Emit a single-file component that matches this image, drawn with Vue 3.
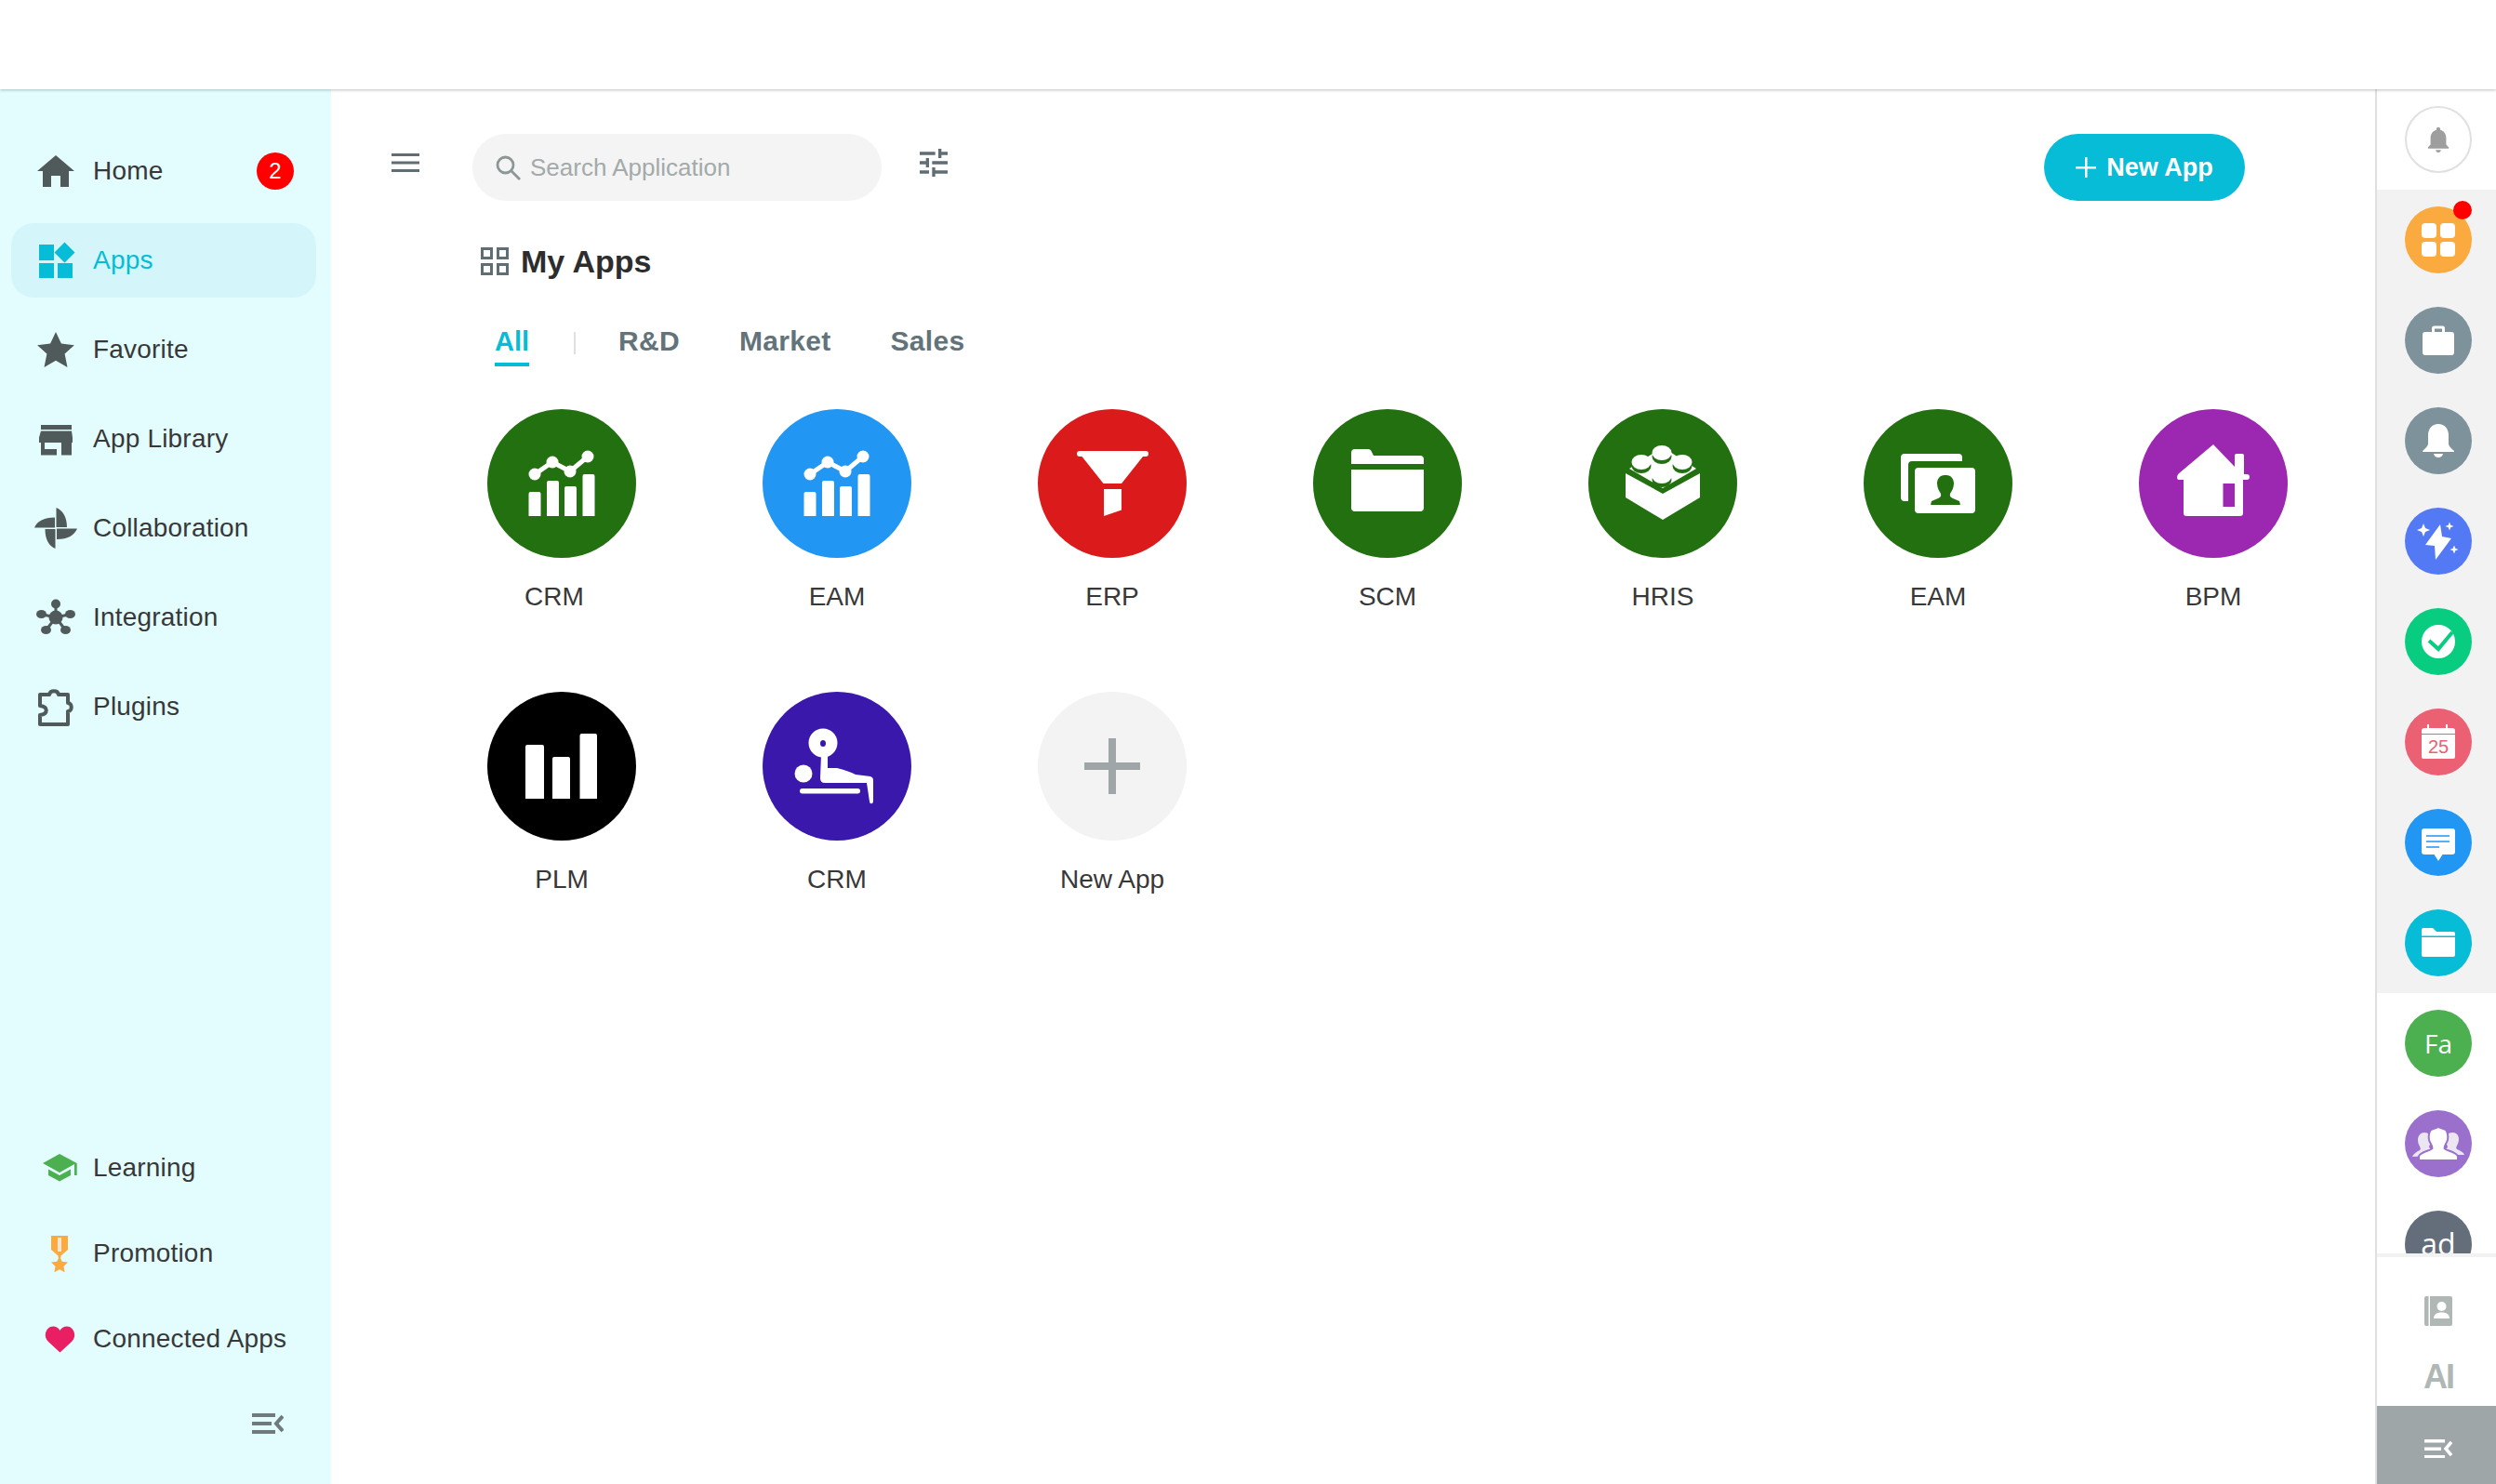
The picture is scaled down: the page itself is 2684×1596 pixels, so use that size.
<script setup>
const tabs = ['R&D', 'Market', 'Sales']
</script>

<template>
  <div class="page">
    <header class="topbar"></header>
    <div class="body">
      <aside class="sidebar">
        <nav class="nav">
          <a class="nav-item">
            <svg class="nav-icon" viewBox="0 0 48 48"><path d="M24 7 4 24h6v17h9V29h10v12h9V24h6z" /></svg>
            <span>Home</span>
            <span class="badge">2</span>
          </a>
          <a class="nav-item active">
            <svg class="nav-icon" viewBox="0 0 48 48">
              <path d="M6 7h16v17H6zM6 27h16v16H6zM26 27h16v16H26zM33.500 4.500 44.500 15.500 33.500 26.500 22.500 15.500z" />
            </svg>
            <span>Apps</span>
          </a>
          <a class="nav-item">
            <svg class="nav-icon" viewBox="0 0 48 48"><path d="m24 5 5.900 12.600 14 1.600-10.300 9.400 2.900 14.400-12.500-7.200-12.500 7.200 2.900-14.400L4.100 19.200l14-1.600z" /></svg>
            <span>Favorite</span>
          </a>
          <a class="nav-item">
            <svg class="nav-icon" viewBox="0 0 48 48">
              <path d="M8 9h33v5H8zM8 15.500h33l1 7V28H6v-5.500zM8 28h4v7h13v6.500H8zM30 28h11v13.500H30z" />
            </svg>
            <span>App Library</span>
          </a>
          <a class="nav-item">
            <svg class="nav-icon" viewBox="0 0 48 48">
              <path d="M24.500 2c7 3 11.500 10 11.500 21H24.500zM25 24.500h22c-3 7-10 11.500-22 11.500zM23.500 46c-7-3-11-10-11-21h11zM1 23.500c3-7 10-11 22-11v11z" />
            </svg>
            <span>Collaboration</span>
          </a>
          <a class="nav-item">
            <svg class="nav-icon" viewBox="0 0 48 48">
              <path class="spoke" d="M24 24V10M24 24 8 20.500M24 24l16-3.500M24 24 13.300 38M24 24l10.700 14" />
              <circle cx="24" cy="24" r="7.500" />
              <circle cx="24" cy="9.500" r="5" />
              <ellipse cx="8.500" cy="20.500" rx="5.500" ry="4.500" />
              <ellipse cx="39.500" cy="20.500" rx="5.500" ry="4.500" />
              <ellipse cx="13.500" cy="37.500" rx="5.500" ry="4.500" />
              <ellipse cx="34.500" cy="37.500" rx="5.500" ry="4.500" />
            </svg>
            <span>Integration</span>
          </a>
          <a class="nav-item">
            <svg class="nav-icon" viewBox="0 0 48 48">
              <path class="outline" d="M7 11h10c1-5 9-5 10 0h10v9c5 0 5 9 0 9v14H7V33c9-1 9-9 0-10z" />
            </svg>
            <span>Plugins</span>
          </a>
        </nav>

        <div class="nav-bottom">
          <a class="bottom-item">
            <svg class="nav-icon" viewBox="0 0 48 48">
              <path fill="#4caf50" d="M24 9 6 19l18 10 16-9v12h2.700V19zM12 25.500 24 32l12-6.500V32l-12 6.500L12 32z" />
            </svg>
            <span>Learning</span>
          </a>
          <a class="bottom-item">
            <svg class="nav-icon" viewBox="0 0 48 48">
              <path fill="#fbaa3f" d="M15 5h18v15l-7.500 6.500v2h-3v-2L15 20zM24 27l2.800 5.700 6.200.9-4.500 4.400 1.100 6.200-5.600-3-5.600 3 1.100-6.200-4.500-4.400 6.200-.9z" />
              <path fill="#f3e7d3" d="M22 7h4v15h-4z" />
            </svg>
            <span>Promotion</span>
          </a>
          <a class="bottom-item">
            <svg class="nav-icon" viewBox="0 0 48 48">
              <path fill="#e91e63" d="M24.500 38.500 12 27c-3-2.800-3.500-6-3-9 .7-4 4-7.500 8-7.500 3.500 0 6 1.700 7.500 4.500 1.500-2.800 4-4.500 7.500-4.500 4 0 7.300 3.500 8 7.500.5 3-.1 6.200-3 9z" />
            </svg>
            <span class="clip">Connected Apps</span>
          </a>
          <button class="collapse">
            <svg width="34" height="22" viewBox="0 0 34 22">
              <path fill="#6f7a7c" d="M0 0h25v4H0zM0 9h21v4H0zM0 18h25v4H0z" />
              <path fill="none" stroke="#6f7a7c" stroke-width="4" d="M33 3 26 11l7 8" />
            </svg>
          </button>
        </div>
      </aside>

      <main class="main">
        <div class="toolbar">
          <svg class="hamburger" width="30" height="20" viewBox="0 0 30 20"><path d="M0 0h30v3H0zM0 8.500h30v3H0zM0 17h30v3H0z" /></svg>
          <div class="search">
            <svg width="28" height="28" viewBox="0 0 28 28" fill="none" stroke="#8c9696" stroke-width="2.800">
              <circle cx="11.500" cy="11.500" r="8.500" />
              <path d="m18 18 9 9" />
            </svg>
            <span>Search Application</span>
          </div>
          <svg class="tune" width="30" height="30" viewBox="3 3 18 18">
            <path d="M3 17v2h6v-2H3zM3 5v2h10V5H3zm10 16v-2h8v-2h-8v-2h-2v6h2zM7 9v2H3v2h4v2h2V9H7zm14 4v-2H11v2h10zm-6-4h2V7h4V5h-4V3h-2v6z" />
          </svg>
          <button class="new-app">
            <svg width="22" height="22" viewBox="0 0 22 22"><path d="M10 0h2.500v22H10zM0 10h22v2.500H0z" fill="#fff" /></svg>
            <span>New App</span>
          </button>
        </div>

        <div class="content">
          <div class="heading">
            <svg width="30" height="30" viewBox="0 0 30 30" fill="none" stroke="#5f6e75" stroke-width="3">
              <path d="M1.500 1.500h10v10h-10zM18.500 1.500h10v10h-10zM1.500 18.500h10v10h-10zM18.500 18.500h10v10h-10z" />
            </svg>
            <h1>My Apps</h1>
          </div>

          <div class="tabs">
            <span class="tab current">All</span>
            <span class="tab-divider"></span>
            <span v-for="tab in tabs" :key="tab" class="tab">{{ tab }}</span>
          </div>

          <div class="grid">
            <div class="app">
              <div class="circle green">
                <svg viewBox="0 0 160 160">
                  <path class="chart-line" d="m51 70 19-13 19 10 19-16" />
                  <circle cx="51" cy="70" r="6.500" /><circle cx="70" cy="57" r="6.500" /><circle cx="89" cy="67" r="6.500" /><circle cx="108" cy="51" r="6.500" />
                  <path d="M44.500 115V91q0-2 2-2h9q2 0 2 2v24zM64 115V79q0-2 2-2h9q2 0 2 2v36zM83 115V85q0-2 2-2h9q2 0 2 2v30zM102.500 115V72q0-2 2-2h9q2 0 2 2v43z" />
                </svg>
              </div>
              <div class="label first">CRM</div>
            </div>
            <div class="app">
              <div class="circle blue">
                <svg viewBox="0 0 160 160">
                  <path class="chart-line" d="m51 70 19-13 19 10 19-16" />
                  <circle cx="51" cy="70" r="6.500" /><circle cx="70" cy="57" r="6.500" /><circle cx="89" cy="67" r="6.500" /><circle cx="108" cy="51" r="6.500" />
                  <path d="M44.500 115V91q0-2 2-2h9q2 0 2 2v24zM64 115V79q0-2 2-2h9q2 0 2 2v36zM83 115V85q0-2 2-2h9q2 0 2 2v30zM102.500 115V72q0-2 2-2h9q2 0 2 2v43z" />
                </svg>
              </div>
              <div class="label">EAM</div>
            </div>
            <div class="app">
              <div class="circle red">
                <svg viewBox="0 0 160 160">
                  <path d="M45 45h71q3 0 3 3t-3 3h-3L90 80H70.500L47.500 51H45q-3 0-3-3t3-3zM71 86h19v22.500L71 115z" />
                </svg>
              </div>
              <div class="label">ERP</div>
            </div>
            <div class="app">
              <div class="circle green">
                <svg viewBox="0 0 160 160">
                  <path d="M41 59V47q0-4 4-4h14q3 0 4 3l2 4h50q4 0 4 4v5zM41 65h78v41q0 4-4 4H45q-4 0-4-4z" />
                </svg>
              </div>
              <div class="label">SCM</div>
            </div>
            <div class="app">
              <div class="circle green">
                <svg viewBox="0 0 160 160">
                  <path d="M40 69 80 91l40-22v26l-40 24-40-24z" />
                  <path d="m44 64 36-23 36 23-36 21z" />
                  <g class="stud">
                    <ellipse cx="79" cy="76" rx="10.500" ry="8" />
                  </g>
                  <ellipse cx="79" cy="72" rx="10.500" ry="8" />
                  <g class="stud">
                    <ellipse cx="79" cy="51" rx="10.500" ry="8" />
                    <ellipse cx="57" cy="61" rx="10.500" ry="8" />
                    <ellipse cx="101" cy="61" rx="10.500" ry="8" />
                  </g>
                  <ellipse cx="57" cy="57" rx="10.500" ry="8" />
                  <ellipse cx="101" cy="57" rx="10.500" ry="8" />
                  <ellipse cx="79" cy="47" rx="10.500" ry="8" />
                </svg>
              </div>
              <div class="label">HRIS</div>
            </div>
            <div class="app">
              <div class="circle green">
                <svg viewBox="0 0 160 160">
                  <path d="M44 48h58q4 0 4 4v4H52q-4 0-4 4v39h-4q-4 0-4-4V52q0-4 4-4z" />
                  <rect x="55" y="63" width="65" height="49" rx="4" />
                  <path class="cut" d="M87 71c-5 0-8 4-8 9 0 4 2 8 4 11 .5 2 0 4-3 5l-7 3-1 4h32l-1-4-7-3c-3-1-3.500-3-3-5 2-3 4-7 4-11 0-5-3-9-8-9z" />
                </svg>
              </div>
              <div class="label">EAM</div>
            </div>
            <div class="app">
              <div class="circle purple">
                <svg viewBox="0 0 160 160">
                  <path d="M80 38 103 62V50q0-2 2-2h6q2 0 2 2v20h3q3 0 3 3t-3 3h-4v36q0 3-3 3H51q-3 0-3-3V76h-5q-2 0-2-3l1-3z" />
                  <path class="cut" d="M90.500 80H103v25H90.500z" />
                </svg>
              </div>
              <div class="label">BPM</div>
            </div>
            <div class="app">
              <div class="circle black">
                <svg viewBox="0 0 160 160">
                  <path d="M41 115V59q0-2 2-2h16q2 0 2 2v56zM70 115V72q0-2 2-2h15q2 0 2 2v43zM99.500 115V47q0-2 2-2h14.500q2 0 2 2v68z" />
                </svg>
              </div>
              <div class="label">PLM</div>
            </div>
            <div class="app">
              <div class="circle indigo">
                <svg viewBox="0 0 160 160">
                  <path fill-rule="evenodd" d="M65 39.500a15.500 15.500 0 1 1 0 31 15.500 15.500 0 0 1 0-31zm0 12.500a3 3.500 0 1 0 0 7 3 3.500 0 0 0 0-7z" />
                  <circle cx="44" cy="88" r="9.500" />
                  <path d="M63 68h7v14h10q12 3 20 7l16 2q3 1 3 4v23q-.5 3-3 2-1-.5-1-2l-3-20H67q-5 0-5-5z" />
                  <rect x="40" y="104" width="65" height="5.500" rx="2.700" />
                </svg>
              </div>
              <div class="label">CRM</div>
            </div>
            <div class="app">
              <div class="circle add">
                <svg viewBox="0 0 160 160"><path d="M76 50h8v60h-8zM50 76h60v8H50z" /></svg>
              </div>
              <div class="label">New App</div>
            </div>
          </div>
        </div>
      </main>

      <aside class="rail">
        <div class="rail-top">
          <div class="dot bell-outline">
            <svg width="28" height="28" viewBox="2 2 20 20"><path fill="#9e9e9e" d="M12 22c1.100 0 2-.9 2-2h-4c0 1.100.9 2 2 2zm6-6v-5c0-3.070-1.630-5.640-4.500-6.320V4c0-.83-.67-1.500-1.500-1.500s-1.500.67-1.500 1.500v.68C7.640 5.360 6 7.920 6 11v5l-2 2v1h16v-1l-2-2z" /></svg>
          </div>
        </div>
        <div class="rail-apps">
          <div class="dot" style="background:#fbaa3f">
            <svg viewBox="0 0 72 72"><rect x="18" y="18" width="16" height="16" rx="4" /><rect x="38" y="18" width="16" height="16" rx="4" /><rect x="18" y="38" width="16" height="16" rx="4" /><rect x="38" y="38" width="16" height="16" rx="4" /></svg>
            <i class="red-dot"></i>
          </div>
          <div class="dot" style="background:#7d929b">
            <svg viewBox="0 0 72 72"><path fill-rule="evenodd" d="M29 27v-4q0-2.500 2.500-2.500h9q2.500 0 2.500 2.500v4h7q3 0 3 3v19q0 3-3 3H22q-3 0-3-3V30q0-3 3-3zm3-3.500V27h8v-3.500z" /></svg>
          </div>
          <div class="dot" style="background:#7d929b">
            <svg viewBox="0 0 72 72"><path d="M36 18c7 0 11 5.500 11 12v9c0 3 3 5 6 8v1H19v-1c3-3 6-5 6-8v-9c0-6.500 4-12 11-12zM31 50h10c-.5 2.500-2.500 4-5 4s-4.500-1.500-5-4z" /></svg>
          </div>
          <div class="dot" style="background:#5479f5">
            <svg viewBox="0 0 72 72"><path d="M38 18 22 40l10 1 1 15 17-23-10-2zM20 17l2 5 5 2-5 2-2 5-2-5-5-2 5-2zM48 15.500l1.300 3.200 3.200 1.300-3.200 1.300-1.300 3.200-1.300-3.200-3.200-1.300 3.200-1.300zM53 40.500l1.300 3.200 3.200 1.300-3.200 1.300-1.300 3.200-1.300-3.200-3.200-1.300 3.200-1.300z" /></svg>
          </div>
          <div class="dot" style="background:#08cc80">
            <svg viewBox="0 0 72 72"><circle cx="36" cy="36" r="18" /><path fill="none" stroke="#08cc80" stroke-width="4" d="m26 35 10 9 15-18" /></svg>
          </div>
          <div class="dot" style="background:#ec6073">
            <svg viewBox="0 0 72 72">
              <path d="M24 17h2v4h18v-4h2v4h5q3 0 3 3v3H18v-3q0-3 3-3h3zM18 28h36v24q0 2-2 2H20q-2 0-2-2z" />
              <text x="36" y="47.500" class="cal-day">25</text>
            </svg>
          </div>
          <div class="dot" style="background:#2196f3">
            <svg viewBox="0 0 72 72">
              <path d="M21 21h30q3 0 3 3v22q0 3-3 3H40.500L36 56l-4.500-7H21q-3 0-3-3V24q0-3 3-3z" />
              <path stroke="#2196f3" stroke-width="1.600" d="M23 29h25M23 35h25M23 41h14" />
            </svg>
          </div>
          <div class="dot" style="background:#06bcd7">
            <svg viewBox="0 0 72 72"><path d="M18 28.500V22q0-2 2-2h9q2 0 3 2l2 2h18q2 0 2 2v2.500zM18 30h36v19q0 2-2 2H20q-2 0-2-2z" /></svg>
          </div>
        </div>
        <div class="rail-people">
          <div class="dot initials" style="background:#4caf50">Fa</div>
          <div class="dot" style="background:#9a70cc">
            <svg viewBox="0 0 72 72">
              <path fill="#ebe6f2" d="M21 24c4.500 0 7 3.500 7 8 0 3-1 5-2 7 0 2 2 3 4 4l-2 6-20 1c1-3 4-5 8-7 1-1 1-2 0-4-1-2-2-4-2-7 0-4.500 3-8 7-8zM51 24c-4.500 0-7 3.500-7 8 0 3 1 5 2 7 0 2-2 3-4 4l2 5 20 0c-1-3-4-4-8-6-1-1-1-2 0-4 1-2 2-4 2-7 0-4.500-3-7-7-7z" />
              <path stroke="#9a70cc" stroke-width="2" d="M36 18l8 3c2 3 3 6 2 11-1 4-3.500 5-3.500 9 0 2 14.500 4 14.500 9v4H15v-4c0-5 14.500-7 14.500-9 0-4-2.500-5-3.500-9-1-5 0-8 2-11z" />
            </svg>
          </div>
          <div class="dot initials ad">ad</div>
        </div>
        <div class="rail-tools">
          <svg width="30" height="32" viewBox="0 0 30 32">
            <path fill="#b0b8b6" d="M2 0h2.500v32H2q-2 0-2-2V2q0-2 2-2zM6 0h22q2 0 2 2v28q0 2-2 2H6z" />
            <circle cx="18.500" cy="11" r="5" fill="#fff" />
            <path fill="#fff" d="M10 24c0-5 4-6.500 8.500-6.500S27 19 27 24z" />
          </svg>
          <span class="ai">AI</span>
        </div>
        <button class="rail-collapse">
          <svg width="30" height="20" viewBox="0 0 30 20">
            <path fill="#fff" d="M0 0h22v3.500H0zM0 8.500h18v3.500H0zM0 17h22v3.500H0z" />
            <path fill="none" stroke="#fff" stroke-width="3.500" d="M29 3 23 10l6 7" />
          </svg>
        </button>
      </aside>
    </div>
  </div>
</template>

<style>
html, body {
  margin: 0;
  background: #fff;
}
</style>

<style scoped>
.page {
  display: flex;
  flex-direction: column;
  height: 1596px;
  overflow: hidden;
  font-family: "Liberation Sans", Arial, sans-serif;
  color: #383838;
}

.topbar {
  flex: 0 0 96px;
  background: #fff;
  box-shadow: 0 1px 3px rgba(0, 0, 0, .25);
  position: relative;
  z-index: 2;
}

.body {
  flex: 1;
  display: flex;
  min-height: 0;
}

/* left menu */
.sidebar {
  flex: 0 0 356px;
  background: #e3fdff;
  display: flex;
  flex-direction: column;
  justify-content: space-between;
}

.nav {
  display: flex;
  flex-direction: column;
  gap: 16px;
  padding: 48px 16px 0 12px;
}

.nav-item {
  display: flex;
  align-items: center;
  gap: 16px;
  height: 80px;
  padding: 0 24px;
  border-radius: 24px;
  font-size: 28px;
  letter-spacing: .2px;
}

.nav-item.active {
  background: #d4f6fa;
  color: #06bcd7;
}

.nav-item.active .nav-icon {
  fill: #06bcd7;
}

.nav-icon {
  flex: 0 0 48px;
  width: 48px;
  height: 48px;
  fill: #505a5a;
}

.spoke {
  fill: none;
  stroke: #505a5a;
  stroke-width: 3;
}

.outline {
  fill: none;
  stroke: #505a5a;
  stroke-width: 4;
  stroke-linejoin: round;
}

.badge {
  width: 40px;
  height: 40px;
  margin-left: auto;
  border-radius: 50%;
  background: #f00;
  color: #fff;
  font-size: 24px;
  line-height: 40px;
  text-align: center;
}

.nav-bottom {
  display: flex;
  flex-direction: column;
  gap: 32px;
  padding: 0 0 54px 40px;
}

.bottom-item {
  display: flex;
  align-items: center;
  gap: 12px;
  height: 60px;
  font-size: 28px;
  letter-spacing: .2px;
}

.clip {
  width: 208px;
  overflow: hidden;
  white-space: nowrap;
}

.collapse {
  align-self: flex-start;
  margin: 18px 0 0 231px;
  padding: 0;
  height: 22px;
  border: 0;
  background: none;
}

/* main area */
.main {
  flex: 1;
  padding: 48px 140px 0 65px;
  min-width: 0;
}

.toolbar {
  display: flex;
  align-items: center;
  height: 72px;
}

.hamburger,
.tune {
  fill: #5f6e75;
  margin-bottom: 10px;
}

.search {
  display: flex;
  align-items: center;
  gap: 10px;
  width: 440px;
  height: 72px;
  margin: 0 41px 0 57px;
  padding: 0 24px;
  box-sizing: border-box;
  border-radius: 36px;
  background: #f4f4f4;
  color: #a3aaaa;
  font-size: 26px;
}

.new-app {
  display: flex;
  align-items: center;
  justify-content: center;
  gap: 11px;
  width: 216px;
  height: 72px;
  margin-left: auto;
  padding: 0;
  border: 0;
  border-radius: 36px;
  background: #06bcd7;
  color: #fff;
  font: bold 27px "Liberation Sans", Arial, sans-serif;
}

.content {
  margin-left: 96px;
}

.heading {
  display: flex;
  align-items: center;
  gap: 13px;
  height: 40px;
  margin-top: 45px;
}

.heading h1 {
  margin: 0;
  font-size: 34px;
  line-height: 40px;
  color: #2d2d2d;
}

.tabs {
  display: flex;
  align-items: center;
  height: 46px;
  margin: 47px 0 46px 15px;
}

.tab {
  height: 46px;
  box-sizing: border-box;
  margin-right: 64px;
  border-bottom: 4px solid transparent;
  font-size: 30px;
  font-weight: bold;
  line-height: 37px;
  letter-spacing: .3px;
  color: #63737a;
}

.tab.current {
  margin-right: 49px;
  font-size: 29px;
  line-height: 38px;
  letter-spacing: 0;
  color: #06bcd7;
  border-bottom-color: #06bcd7;
}

.tab-divider {
  width: 2px;
  height: 24px;
  margin: 0 46px 4px -1px;
  background: #e0e0e0;
}

.grid {
  display: grid;
  grid-template-columns: repeat(7, 160px);
  column-gap: 136px;
  row-gap: 85px;
  margin-left: 7px;
}

.app {
  display: flex;
  flex-direction: column;
  align-items: center;
}

.circle {
  width: 160px;
  height: 160px;
  border-radius: 50%;
}

.circle svg {
  display: block;
  fill: #fff;
}

.green { background: #237011; }
.blue { background: #2196f3; }
.red { background: #db1b1b; }
.purple { background: #9c27b0; }
.black { background: #000; }
.indigo { background: #3a18ac; }
.add { background: #f3f3f3; }

.add svg {
  fill: #9fa6a8;
}

.chart-line {
  fill: none;
  stroke: #fff;
  stroke-width: 5;
}

.stud ellipse {
  fill: #237011;
}

.cut {
  fill: #237011;
}

.purple .cut {
  fill: #9c27b0;
}

.label {
  margin-top: 25px;
  font-size: 28px;
  line-height: 34px;
  white-space: nowrap;
}

.label.first {
  padding-right: 16px;
}

/* right rail */
.rail {
  flex: 0 0 128px;
  border-left: 2px solid #e0e0e0;
  display: flex;
  flex-direction: column;
  align-items: center;
}

.rail-top {
  flex: 0 0 108px;
  align-self: stretch;
  display: flex;
  justify-content: center;
  box-sizing: border-box;
  padding: 18px 0 0 4px;
}

.dot {
  position: relative;
  flex: 0 0 72px;
  width: 72px;
  height: 72px;
  border-radius: 50%;
}

.dot svg {
  display: block;
  fill: #fff;
}

.bell-outline {
  box-sizing: border-box;
  border: 2px solid #e0e0e0;
  display: flex;
  align-items: center;
  justify-content: center;
}

.bell-outline svg {
  width: 28px;
  height: 28px;
}

.red-dot {
  position: absolute;
  top: -6px;
  right: 0;
  width: 20px;
  height: 20px;
  border-radius: 50%;
  background: #f00;
}

.cal-day {
  fill: #ec6073;
  font-size: 20px;
  text-anchor: middle;
}

.rail-apps,
.rail-people {
  align-self: stretch;
  display: flex;
  flex-direction: column;
  align-items: center;
  gap: 36px;
  padding: 18px 0 0 4px;
  overflow: hidden;
}

.rail-apps {
  flex: 0 0 864px;
  box-sizing: border-box;
  background: #f2f2f2;
}

.rail-people {
  flex: 0 0 280px;
  box-sizing: border-box;
}

.initials {
  color: #fff;
  font-family: "Open Sans", sans-serif;
  font-size: 28px;
  line-height: 72px;
  text-align: center;
}

.ad {
  background: #636e7a;
  font-size: 32px;
}

.rail-tools {
  flex: 0 0 164px;
  align-self: stretch;
  box-sizing: border-box;
  border-top: 4px solid #f2f2f2;
  padding: 42px 0 0 4px;
  display: flex;
  flex-direction: column;
  align-items: center;
}

.ai {
  margin-top: 33px;
  font-size: 36px;
  font-weight: bold;
  line-height: 44px;
  letter-spacing: -2px;
  color: #b0b8b6;
}

.rail-collapse {
  flex: 0 0 84px;
  align-self: stretch;
  display: flex;
  align-items: center;
  justify-content: center;
  border: 0;
  padding: 8px 0 0 4px;
  background: #9fa6a8;
}
</style>
